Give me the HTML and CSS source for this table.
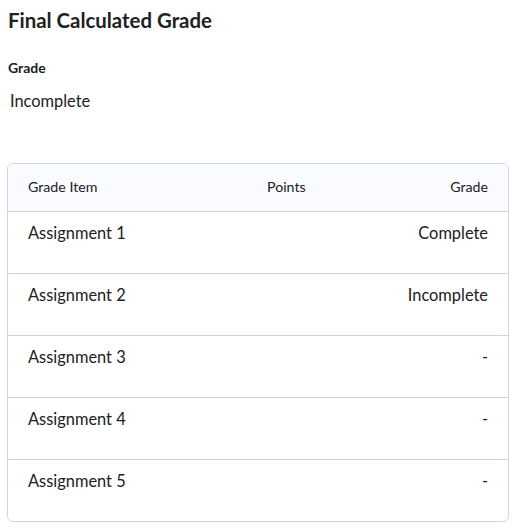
FILE: index.html
```html
<!DOCTYPE html>
<html>
<head>
<meta charset="utf-8">
<link rel="stylesheet" href="styles.css">
</head>
<body>
<h1 class="title">Final Calculated Grade</h1>
<div class="label">Grade</div>
<div class="value">Incomplete</div>
<div class="table">
  <div class="row head">
    <div class="c1">Grade Item</div>
    <div class="c2">Points</div>
    <div class="c3">Grade</div>
  </div>
  <div class="row">
    <div class="c1">Assignment 1</div>
    <div class="c2"></div>
    <div class="c3">Complete</div>
  </div>
  <div class="row">
    <div class="c1">Assignment 2</div>
    <div class="c2"></div>
    <div class="c3">Incomplete</div>
  </div>
  <div class="row">
    <div class="c1">Assignment 3</div>
    <div class="c2"></div>
    <div class="c3">-</div>
  </div>
  <div class="row">
    <div class="c1">Assignment 4</div>
    <div class="c2"></div>
    <div class="c3">-</div>
  </div>
  <div class="row last">
    <div class="c1">Assignment 5</div>
    <div class="c2"></div>
    <div class="c3">-</div>
  </div>
</div>
</body>
</html>
```

FILE: styles.css
```css
html, body {
  margin: 0;
  background: #ffffff;
}
body {
  padding: 8px 7px 0 7px;
  font-family: Lato, "Liberation Sans", sans-serif;
  color: #202122;
}
.title {
  margin: 0;
  font-size: 20.4px;
  line-height: 24px;
  font-weight: 700;
  padding-left: 1px;
}
.label {
  margin-top: 28px;
  font-size: 14px;
  line-height: 16px;
  font-weight: 700;
  padding-left: 1px;
}
.value {
  margin-top: 13px;
  font-size: 16.4px;
  line-height: 24px;
  padding-left: 3px;
}
.table {
  margin-top: 50px;
  border: 1px solid #cdd5dc;
  border-radius: 6px;
  overflow: hidden;
}
.row {
  display: grid;
  grid-template-columns: 239px 1fr auto;
  padding: 9px 20px 28px 20px;
  font-size: 16.4px;
  line-height: 24px;
  border-bottom: 1px solid #cdd5dc;
}
.row.last {
  border-bottom: none;
}
.row.head {
  background: #f9fbff;
  font-size: 14.2px;
  line-height: 20px;
  padding: 13px 20px 14px 20px;
}
.c3 {
  text-align: right;
}
```
